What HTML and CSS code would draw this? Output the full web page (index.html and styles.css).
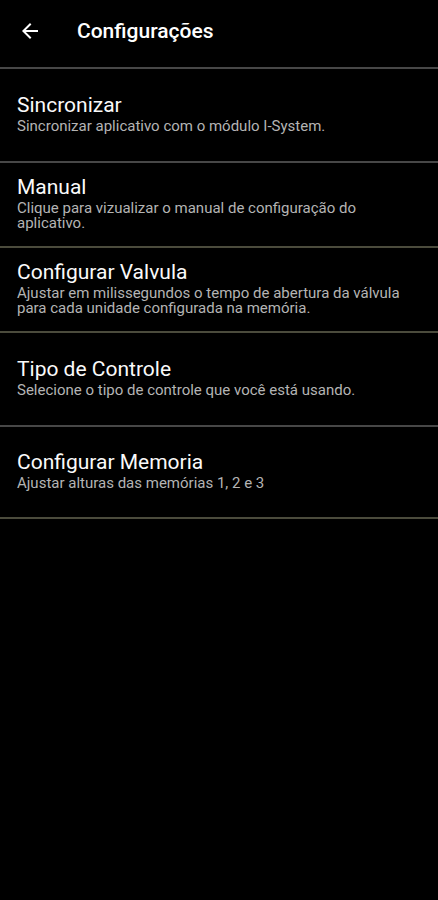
FILE: index.html
```html
<html>
<head>
<meta http-equiv="Content-Type" content="text/html; charset=utf-8">
<title>Configurações</title>
<link rel="stylesheet" href="styles.css">
</head>
<body>
<div id="app">
	<div class="toolbar">
		<a href="javascript:;" class="back">
			<svg width="24" height="24" viewBox="0 0 24 24"><path fill="#fff" d="M20 11H7.83l5.59-5.59L12 4l-8 8 8 8 1.41-1.41L7.83 13H20v-2z"/></svg>
		</a>
		<span class="toolbar-title">Configurações</span>
	</div>
	<ul class="prefs">
		<li class="item">
			<div class="title">Sincronizar</div>
			<div class="summary">Sincronizar aplicativo com o módulo I-System.</div>
		</li>
		<li class="item olive">
			<div class="title">Manual</div>
			<div class="summary">Clique para vizualizar o manual de configuração do aplicativo.</div>
		</li>
		<li class="item olive">
			<div class="title">Configurar Valvula</div>
			<div class="summary">Ajustar em milissegundos o tempo de abertura da válvula para cada unidade configurada na memória.</div>
		</li>
		<li class="item">
			<div class="title">Tipo de Controle</div>
			<div class="summary">Selecione o tipo de controle que você está usando.</div>
		</li>
		<li class="item olive">
			<div class="title">Configurar Memoria</div>
			<div class="summary">Ajustar alturas das memórias 1, 2 e 3</div>
		</li>
	</ul>
</div>
</body>
</html>
```

FILE: styles.css
```css
html,body{
	margin:0;
	padding:0;
	background:#000;
}
#app{
	width:438px;
	min-height:900px;
	background:#000;
	font-family:Roboto,"Noto Sans",sans-serif;
	color:#fff;
}
.toolbar{
	display:flex;
	align-items:center;
	height:69px;
	box-sizing:border-box;
	padding:0 0 5px 18px;
	border-bottom:2px solid #474747;
}
.back{
	display:flex;
	width:24px;
	height:24px;
}
.toolbar-title{
	margin-left:35px;
	font-size:21px;
	font-weight:500;
}
.prefs{
	list-style:none;
	margin:0;
	padding:0;
}
.item{
	display:flex;
	flex-direction:column;
	justify-content:center;
	min-height:94px;
	box-sizing:border-box;
	padding:12px 14px 15px 17px;
	border-bottom:2px solid #474747;
}
.item.olive{
	min-height:84px;
	border-bottom-color:#4b4b3c;
}
.item:last-child{
	min-height:92px;
}
.title{
	font-size:21px;
	line-height:24px;
	color:#fafafa;
}
.summary{
	margin-top:2px;
	font-size:15px;
	line-height:15px;
	color:#b4b4b4;
}
```
